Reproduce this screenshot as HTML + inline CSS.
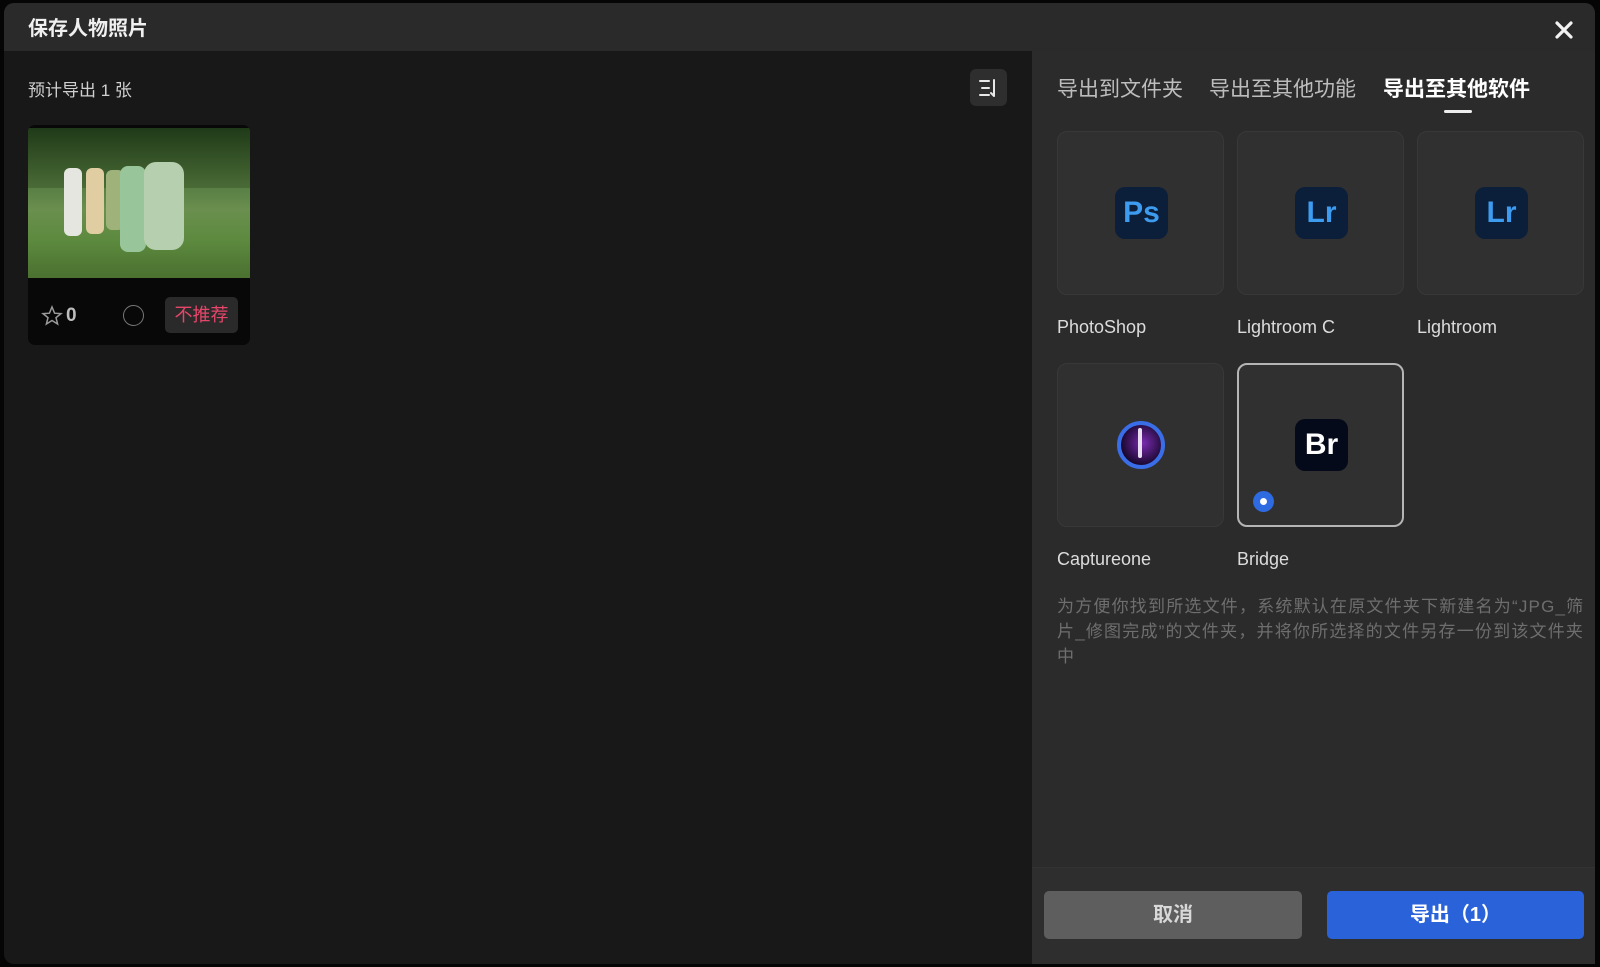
<!DOCTYPE html>
<html><head><meta charset="utf-8"><style>
*{margin:0;padding:0;box-sizing:border-box}
body{width:1600px;height:967px;background:#050505;overflow:hidden;font-family:"Liberation Sans","Noto Sans CJK SC",sans-serif;position:relative}
.dlg{position:absolute;left:4px;top:3px;width:1591px;height:961px;background:#181818;border-radius:10px;overflow:hidden}
.title{position:absolute;left:0;top:0;width:100%;height:48px;background:#2a2a2a}
.title span{position:absolute;left:24px;top:9px;font-size:20px;font-weight:bold;color:#f0f0f0}
.right{position:absolute;left:1028px;top:48px;right:0;bottom:0;background:#2b2b2b}
.abs{position:absolute}
.tab{position:absolute;top:73px;font-size:21px;color:#bdbdbd}
.card{position:absolute;width:167px;height:164px;background:#303030;border:1px solid #383838;border-radius:10px}
.ico{position:absolute;left:57px;top:55px;width:53px;height:52px;border-radius:10px;background:#0b1e3a;color:#3d9bf0;font-weight:bold;font-size:30px;text-align:center;line-height:52px}
.lbl{position:absolute;font-size:18px;color:#dcdcdc}
.desc{position:absolute;left:1057px;top:594px;width:545px;font-size:17px;letter-spacing:1.2px;line-height:25px;color:#6e6e6e;white-space:nowrap}
.btn{position:absolute;top:891px;height:48px;border-radius:5px;text-align:center;line-height:48px;font-size:20px;font-weight:bold}
</style></head><body>
<div class="dlg">
<div class="title"><span>保存人物照片</span></div>
<svg class="abs" style="left:1551px;top:18px" width="18" height="18" viewBox="0 0 18 18"><path d="M2 2L16 16M16 2L2 16" stroke="#f2f2f2" stroke-width="3.2" stroke-linecap="round"/></svg>
<div class="abs" style="left:24px;top:73px;font-size:17px;color:#d0d0d0">预计导出 1 张</div>
<div class="abs" style="left:966px;top:66px;width:37px;height:37px;background:#2e2e2e;border-radius:6px"></div>
<svg class="abs" style="left:974px;top:74px" width="22" height="22" viewBox="0 0 22 22"><path d="M2 4H11M4 11H11M2 18H11M16 3V19M13 16L16 19" stroke="#e8e8e8" stroke-width="2" fill="none" stroke-linecap="round"/></svg>
<div class="abs" style="left:24px;top:122px;width:222px;height:220px;background:#080808;border-radius:7px;overflow:hidden">
 <div class="abs" style="left:0;top:3px;width:222px;height:150px;background:linear-gradient(180deg,#3a5a2c 0%,#4f7440 30%,#6a8f4e 55%,#5c8a3e 75%,#4b7030 100%)">
  <div class="abs" style="left:0;top:0;width:222px;height:60px;background:linear-gradient(180deg,#1f3a18,#4a6b36)"></div>
  <div class="abs" style="left:36px;top:40px;width:18px;height:68px;background:#e6e6e0;border-radius:6px"></div>
  <div class="abs" style="left:58px;top:40px;width:18px;height:66px;background:#e0cda2;border-radius:6px"></div>
  <div class="abs" style="left:78px;top:42px;width:18px;height:60px;background:#9fb27a;border-radius:6px"></div>
  <div class="abs" style="left:92px;top:38px;width:26px;height:86px;background:#98c69a;border-radius:8px"></div>
  <div class="abs" style="left:116px;top:34px;width:40px;height:88px;background:#b6cfae;border-radius:12px"></div>
 </div>
 <svg class="abs" style="left:13px;top:180px" width="22" height="22" viewBox="0 0 22 22"><path d="M11 2L13.6 8.2L20 8.6L15 12.7L16.6 19L11 15.5L5.4 19L7 12.7L2 8.6L8.4 8.2Z" fill="none" stroke="#9a9a9a" stroke-width="1.5"/></svg>
 <div class="abs" style="left:38px;top:180px;font-size:19px;color:#bdbdbd;font-weight:bold">0</div>
 <div class="abs" style="left:95px;top:180px;width:21px;height:21px;border:1.5px solid #777;border-radius:50%"></div>
 <div class="abs" style="left:137px;top:172px;width:73px;height:36px;background:#2a2a2a;border-radius:5px;color:#e5466a;font-size:18px;text-align:center;line-height:36px">不推荐</div>
</div>
<div class="right"></div>
</div>
<div class="tab" style="left:1057px">导出到文件夹</div>
<div class="tab" style="left:1209px">导出至其他功能</div>
<div class="tab" style="left:1383px;color:#fff;font-weight:bold">导出至其他软件</div>
<div class="abs" style="left:1444px;top:110px;width:28px;height:3px;background:#eee;border-radius:2px"></div>

<div class="card" style="left:1057px;top:131px"><div class="ico">Ps</div></div>
<div class="card" style="left:1237px;top:131px"><div class="ico">Lr</div></div>
<div class="card" style="left:1417px;top:131px"><div class="ico">Lr</div></div>
<div class="lbl" style="left:1057px;top:317px">PhotoShop</div>
<div class="lbl" style="left:1237px;top:317px">Lightroom C</div>
<div class="lbl" style="left:1417px;top:317px">Lightroom</div>

<div class="card" style="left:1057px;top:363px">
 <div class="abs" style="left:59px;top:57px;width:48px;height:48px;border-radius:50%;background:radial-gradient(circle at 55% 45%,#7a2bb0,#1a0830 70%);border:4px solid #3a6ee8"></div>
 <div class="abs" style="left:80px;top:64px;width:4px;height:30px;background:#e8e0f0;border-radius:2px"></div>
</div>
<div class="card" style="left:1237px;top:363px;border:2px solid #b5b5b5">
 <div class="ico" style="left:56px;top:54px;background:#050a1a;color:#fff">Br</div>
 <div class="abs" style="left:14px;top:126px;width:21px;height:21px;border-radius:50%;background:#2e6ae0"></div>
 <div class="abs" style="left:21px;top:133px;width:7px;height:7px;border-radius:50%;background:#fff"></div>
</div>
<div class="lbl" style="left:1057px;top:549px">Captureone</div>
<div class="lbl" style="left:1237px;top:549px">Bridge</div>
<div class="desc">为方便你找到所选文件，系统默认在原文件夹下新建名为“JPG_筛<br>片_修图完成”的文件夹，并将你所选择的文件另存一份到该文件夹<br>中</div>

<div class="abs" style="left:1032px;top:867px;width:563px;height:97px;background:#2e2e2e;border-top:1px solid #333"></div>
<div class="btn" style="left:1044px;width:258px;background:#5e5e5e;color:#d8d8d8">取消</div>
<div class="btn" style="left:1327px;width:257px;background:#2962d9;color:#fff">导出（1）</div>
</body></html>
